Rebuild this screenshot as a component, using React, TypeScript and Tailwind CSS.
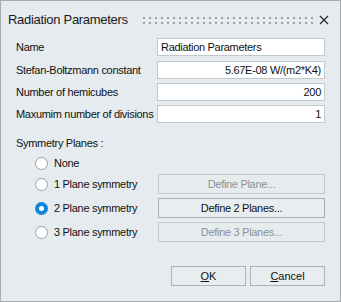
import React from "react";

const font = { fontFamily: '"Liberation Sans", Arial, sans-serif' };

function Dots() {
  const cols = Array.from({ length: 29 }, (_, i) => i);
  return (
    <svg width="171" height="10" viewBox="0 0 171 10">
      {cols.map((i) => (
        <g key={i} fill="#9aa0a4">
          <rect x={1 + i * 6} y={2} width={2} height={2} />
          <rect x={1 + i * 6} y={7} width={2} height={2} />
        </g>
      ))}
    </svg>
  );
}

function CloseIcon() {
  return (
    <svg width="10" height="10" viewBox="0 0 10 10">
      <path d="M1 1 L9 9 M9 1 L1 9" stroke="#2b2b2b" strokeWidth="1.2" fill="none" />
    </svg>
  );
}

function Radio({ checked }: { checked?: boolean }) {
  if (checked) {
    return (
      <span className="w-[13px] h-[13px] rounded-full bg-[#0f86d6] flex items-center justify-center shrink-0">
        <span className="w-[5px] h-[5px] rounded-full bg-white" />
      </span>
    );
  }
  return <span className="w-[13px] h-[13px] rounded-full bg-white border border-[#9a9ea1] shrink-0" />;
}

function Field({ label, value, align, className }: { label: string; value: string; align: "left" | "right"; className?: string }) {
  return (
    <div className={"flex items-center h-[18px] pl-[15px] pr-[15px] " + (className ?? "")}>
      <div className="flex-1 text-[11px] tracking-[-0.3px] text-[#111] whitespace-nowrap">{label}</div>
      <div
        className={
          "w-[168px] h-[18px] bg-white border border-[#c3c8cb] flex items-center text-[11px] tracking-[-0.3px] text-[#111] px-[3px] " +
          (align === "right" ? "justify-end" : "justify-start")
        }
      >
        {value}
      </div>
    </div>
  );
}

function RadioRow({ label, checked, button, enabled, className }: { label: string; checked?: boolean; button?: string; enabled?: boolean; className?: string }) {
  return (
    <div className={"flex items-center h-[20px] pl-[34px] pr-[15px] " + (className ?? "")}>
      <Radio checked={checked} />
      <span className="ml-[6px] flex-1 text-[11px] tracking-[-0.3px] text-[#111] whitespace-nowrap">{label}</span>
      {button && (
        <div
          className={
            "w-[167px] h-[20px] flex items-center justify-center text-[11px] tracking-[-0.3px] border " +
            (enabled ? "border-[#a9aeb1] text-[#111] bg-[#e8edf0]" : "border-[#c4c8cb] text-[#8d9296] bg-[#e6ebee]")
          }
        >
          {button}
        </div>
      )}
    </div>
  );
}

export default function App() {
  return (
    <div style={font} className="w-[341px] h-[302px] border border-[#a6adb1] bg-[#e5ebee] flex flex-col overflow-hidden">
      <div className="h-[37px] flex items-center pl-[7px] pr-[10px] shrink-0">
        <span className="text-[13px] tracking-[-0.3px] text-[#1a1a1a] whitespace-nowrap">Radiation Parameters</span>
        <span className="ml-[14px] mt-[1px] flex items-center">
          <Dots />
        </span>
        <span className="ml-[6px] mt-[1px] flex items-center">
          <CloseIcon />
        </span>
      </div>
      <Field label="Name" value="Radiation Parameters" align="left" />
      <Field label="Stefan-Boltzmann constant" value="5.67E-08 W/(m2*K4)" align="right" className="mt-[5px]" />
      <Field label="Number of hemicubes" value="200" align="right" className="mt-[4px]" />
      <Field label="Maxumim number of divisions" value="1" align="right" className="mt-[4px]" />
      <div className="mt-[14px] h-[13px] pl-[15px] flex items-center text-[11px] tracking-[-0.3px] text-[#111]">Symmetry Planes :</div>
      <RadioRow label="None" className="mt-[3px]" />
      <RadioRow label="1 Plane symmetry" button="Define Plane..." className="mt-[1px]" />
      <RadioRow label="2 Plane symmetry" checked button="Define 2 Planes..." enabled className="mt-[4px]" />
      <RadioRow label="3 Plane symmetry" button="Define 3 Planes..." className="mt-[4px]" />
      <div className="mt-[24px] flex justify-end gap-[4px] pr-[15px]">
        <div className="w-[75px] h-[20px] border border-[#aeb3b6] bg-[#e8edf0] flex items-center justify-center text-[11px] text-[#111]">
          <span><span className="underline">O</span>K</span>
        </div>
        <div className="w-[75px] h-[20px] border border-[#aeb3b6] bg-[#e8edf0] flex items-center justify-center text-[11px] text-[#111]">
          <span><span className="underline">C</span>ancel</span>
        </div>
      </div>
    </div>
  );
}
